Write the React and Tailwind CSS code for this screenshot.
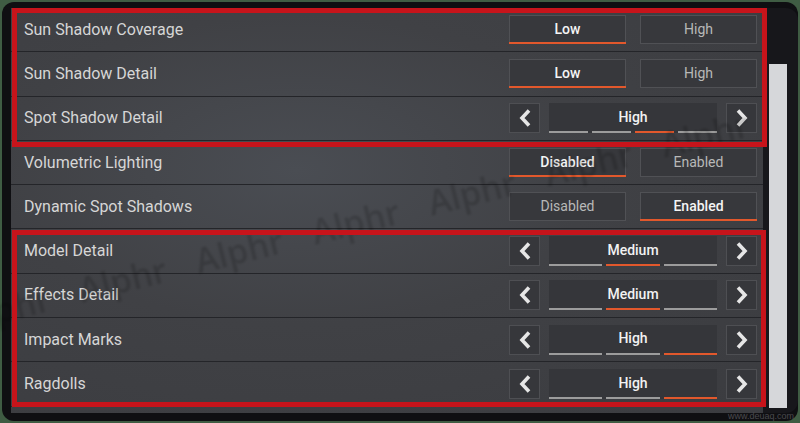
import React from "react";

const Chevron = ({ dir }) => (
  <svg width="12" height="18" viewBox="0 0 12 18">
    {dir === "left" ? (
      <polyline points="10,1.5 3,9 10,16.5" fill="none" stroke="#e6e6e6" strokeWidth="3.6" />
    ) : (
      <polyline points="2,1.5 9,9 2,16.5" fill="none" stroke="#e6e6e6" strokeWidth="3.6" />
    )}
  </svg>
);

const Toggle = ({ label, selected }) => (
  <div className="relative w-[117px] h-[29px] flex items-center justify-center bg-[#37383c] border border-[#505155]">
    <span className={selected ? "text-[14px] font-medium text-[#f4f4f4]" : "text-[14px] font-normal text-[#b8b8b8]"}>
      {label}
    </span>
    {selected && <div className="absolute left-[-1px] right-[-1px] bottom-[-1px] h-[2px] bg-[#e2582c]" />}
  </div>
);

const Toggles = ({ opts, sel }) => (
  <div className="flex gap-[14px]">
    <Toggle label={opts[0]} selected={sel === 0} />
    <Toggle label={opts[1]} selected={sel === 1} />
  </div>
);

const ArrowBtn = ({ dir }) => (
  <div className="w-[31px] h-[30px] flex items-center justify-center bg-[#36373b] border border-[#4e4f53]">
    <Chevron dir={dir} />
  </div>
);

const Selector = ({ value, count, active }) => (
  <div className="flex items-center gap-[9px]">
    <ArrowBtn dir="left" />
    <div className="w-[168px] h-[30px] flex flex-col bg-[#35363a]">
      <div className="flex-1 flex items-center justify-center text-[14px] font-medium text-[#f2f2f2]">{value}</div>
      <div className="flex gap-[4px] h-[2px]">
        {Array.from({ length: count }).map((_, i) => (
          <div key={i} className={i === active ? "flex-1 bg-[#e2582c]" : "flex-1 bg-[#9c9c9c]"} />
        ))}
      </div>
    </div>
    <ArrowBtn dir="right" />
  </div>
);

const rows = [
  { label: "Sun Shadow Coverage", ctl: <Toggles opts={["Low", "High"]} sel={0} /> },
  { label: "Sun Shadow Detail", ctl: <Toggles opts={["Low", "High"]} sel={0} /> },
  { label: "Spot Shadow Detail", ctl: <Selector value="High" count={4} active={2} /> },
  { label: "Volumetric Lighting", ctl: <Toggles opts={["Disabled", "Enabled"]} sel={0} /> },
  { label: "Dynamic Spot Shadows", ctl: <Toggles opts={["Disabled", "Enabled"]} sel={1} /> },
  { label: "Model Detail", ctl: <Selector value="Medium" count={3} active={1} /> },
  { label: "Effects Detail", ctl: <Selector value="Medium" count={3} active={1} /> },
  { label: "Impact Marks", ctl: <Selector value="High" count={3} active={2} /> },
  { label: "Ragdolls", ctl: <Selector value="High" count={3} active={2} /> },
];

export default function App() {
  return (
    <div className="relative w-[800px] h-[423px] overflow-hidden bg-[#3f5c43] p-[2px] font-['Roboto','Liberation_Sans',sans-serif]">
      <div className="w-full h-full rounded-[12px] bg-[#0f0f12] flex pl-[9px] pt-[6px] pb-[8px]">
        <div className="w-[752px] h-full bg-[radial-gradient(ellipse_at_38%_40%,#4a4d53_0%,#404145_45%,#3b3c40_100%)] flex flex-col">
          {rows.map((r, i) => (
            <div key={i} className="h-[44.3px] shrink-0 flex items-center justify-between pl-[13px] pr-[6px] border-b border-[#242529]">
              <span className="text-[16px] text-[#d6d6d6]">{r.label}</span>
              {r.ctl}
            </div>
          ))}
        </div>
        <div className="flex-1 bg-[#17171b] pt-[56px] pl-[6px] pr-[8px] pb-[5px] rounded-r-[12px]">
          <div className="w-[18px] h-full bg-[#d6d7da]" />
        </div>
      </div>

      {/* watermark */}
      <div className="pointer-events-none absolute left-[-52px] top-[303px] h-[40px] origin-left rotate-[-14deg] flex whitespace-nowrap blur-[1.2px] text-black/[0.17] text-[34px] leading-[40px] font-semibold font-['Open_Sans',sans-serif]">
        {Array.from({ length: 7 }).map((_, i) => (
          <span key={i} className="w-[120px] shrink-0 text-center">Alphr</span>
        ))}
      </div>

      {/* highlight boxes */}
      <div className="pointer-events-none absolute left-[12px] top-[8px] w-[755px] h-[139px] border-[5px] border-[#c7141b]" />
      <div className="pointer-events-none absolute left-[12px] top-[230px] w-[754px] h-[177px] border-[5px] border-[#c7141b]" />

      <div className="absolute left-[728px] top-[410px] text-[9px] text-[#4a4a4e] font-['Liberation_Sans',sans-serif]">www.deuaq.com</div>
    </div>
  );
}
